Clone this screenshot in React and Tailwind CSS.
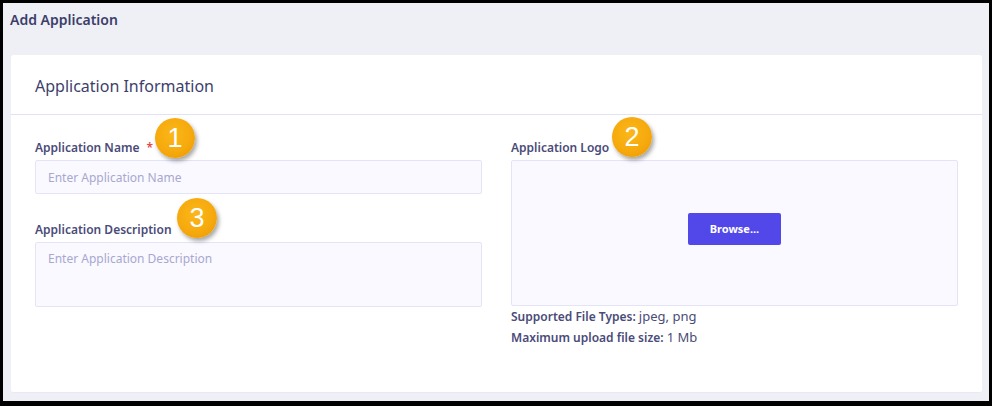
import React from "react";

const Badge = ({ n, className }) => (
  <div
    className={`absolute w-[40px] h-[40px] rounded-full flex items-center justify-center text-white text-[27px] leading-none bg-[radial-gradient(circle_at_45%_40%,#fbb719_0%,#f5a80c_60%,#e59300_100%)] shadow-[2px_3px_4px_rgba(0,0,0,0.35)] ${className}`}
    style={{ fontFamily: "'Liberation Sans', Arial, sans-serif" }}
  >
    {n}
  </div>
);

const App = () => {
  return (
    <div className="w-[992px] h-[406px] bg-black pt-[3px] pl-[3px] pr-[3px] pb-[5px] font-['Noto_Sans',sans-serif]">
      <div className="relative h-full bg-[#eff0f6] flex flex-col">
        <h1 className="pl-[7px] pt-[7px] text-[14px] leading-5 font-semibold text-[#3c3e6a]">
          Add Application
        </h1>

        <div className="mt-[25px] ml-2 mr-[7px] flex-1 mb-[8px] bg-white rounded-[3px] border-b border-[#e9e9f6]">
          <div className="h-[60px] px-6 flex items-center border-b border-[#e2e2f7]">
            <h2 className="text-[16px] text-[#3d3f6b] pt-[2px]">Application Information</h2>
          </div>

          <div className="grid grid-cols-2 gap-x-[29px] px-6 pt-[25px]">
            <div>
              <label className="block text-[12px] leading-4 font-semibold text-[#4a4b78] mb-[4px]">
                Application Name <span className="text-[#e5484d] ml-[4px]">*</span>
              </label>
              <input
                placeholder="Enter Application Name"
                className="w-full h-[34px] px-3 text-[12px] bg-[#f9f9ff] border border-[#e4e4f8] rounded-[2px] placeholder:text-[#a8a8cf] outline-none"
              />
              <label className="block mt-[28px] text-[12px] leading-4 font-semibold text-[#4a4b78] mb-[4px]">
                Application Description
              </label>
              <textarea
                placeholder="Enter Application Description"
                className="block w-full h-[65px] px-3 py-[7px] text-[12px] bg-[#f9f9ff] border border-[#e4e4f8] rounded-[2px] placeholder:text-[#a8a8cf] outline-none resize-none"
              />
            </div>

            <div>
              <label className="block text-[12px] leading-4 font-semibold text-[#4a4b78] mb-[4px]">
                Application Logo
              </label>
              <div className="h-[146px] bg-[#f9f9ff] border border-[#e4e4f8] rounded-[2px] flex items-center justify-center pb-[8px]">
                <button className="w-[93px] h-[32px] bg-[#5247e8] text-white text-[11px] font-bold rounded-[2px]">
                  Browse...
                </button>
              </div>
              <p className="text-[12px] leading-[21px] text-[#4a4b78]">
                <span className="font-semibold">Supported File Types:</span>{" "}
                <span className="text-[13px]">jpeg, png</span>
              </p>
              <p className="text-[12px] leading-[21px] text-[#4a4b78]">
                <span className="font-semibold">Maximum upload file size:</span>{" "}
                <span className="text-[13px]">1 Mb</span>
              </p>
            </div>
          </div>
        </div>

        <Badge n="1" className="left-[152px] top-[115px]" />
        <Badge n="2" className="left-[609px] top-[114px]" />
        <Badge n="3" className="left-[174px] top-[195px]" />
      </div>
    </div>
  );
};

export default App;
